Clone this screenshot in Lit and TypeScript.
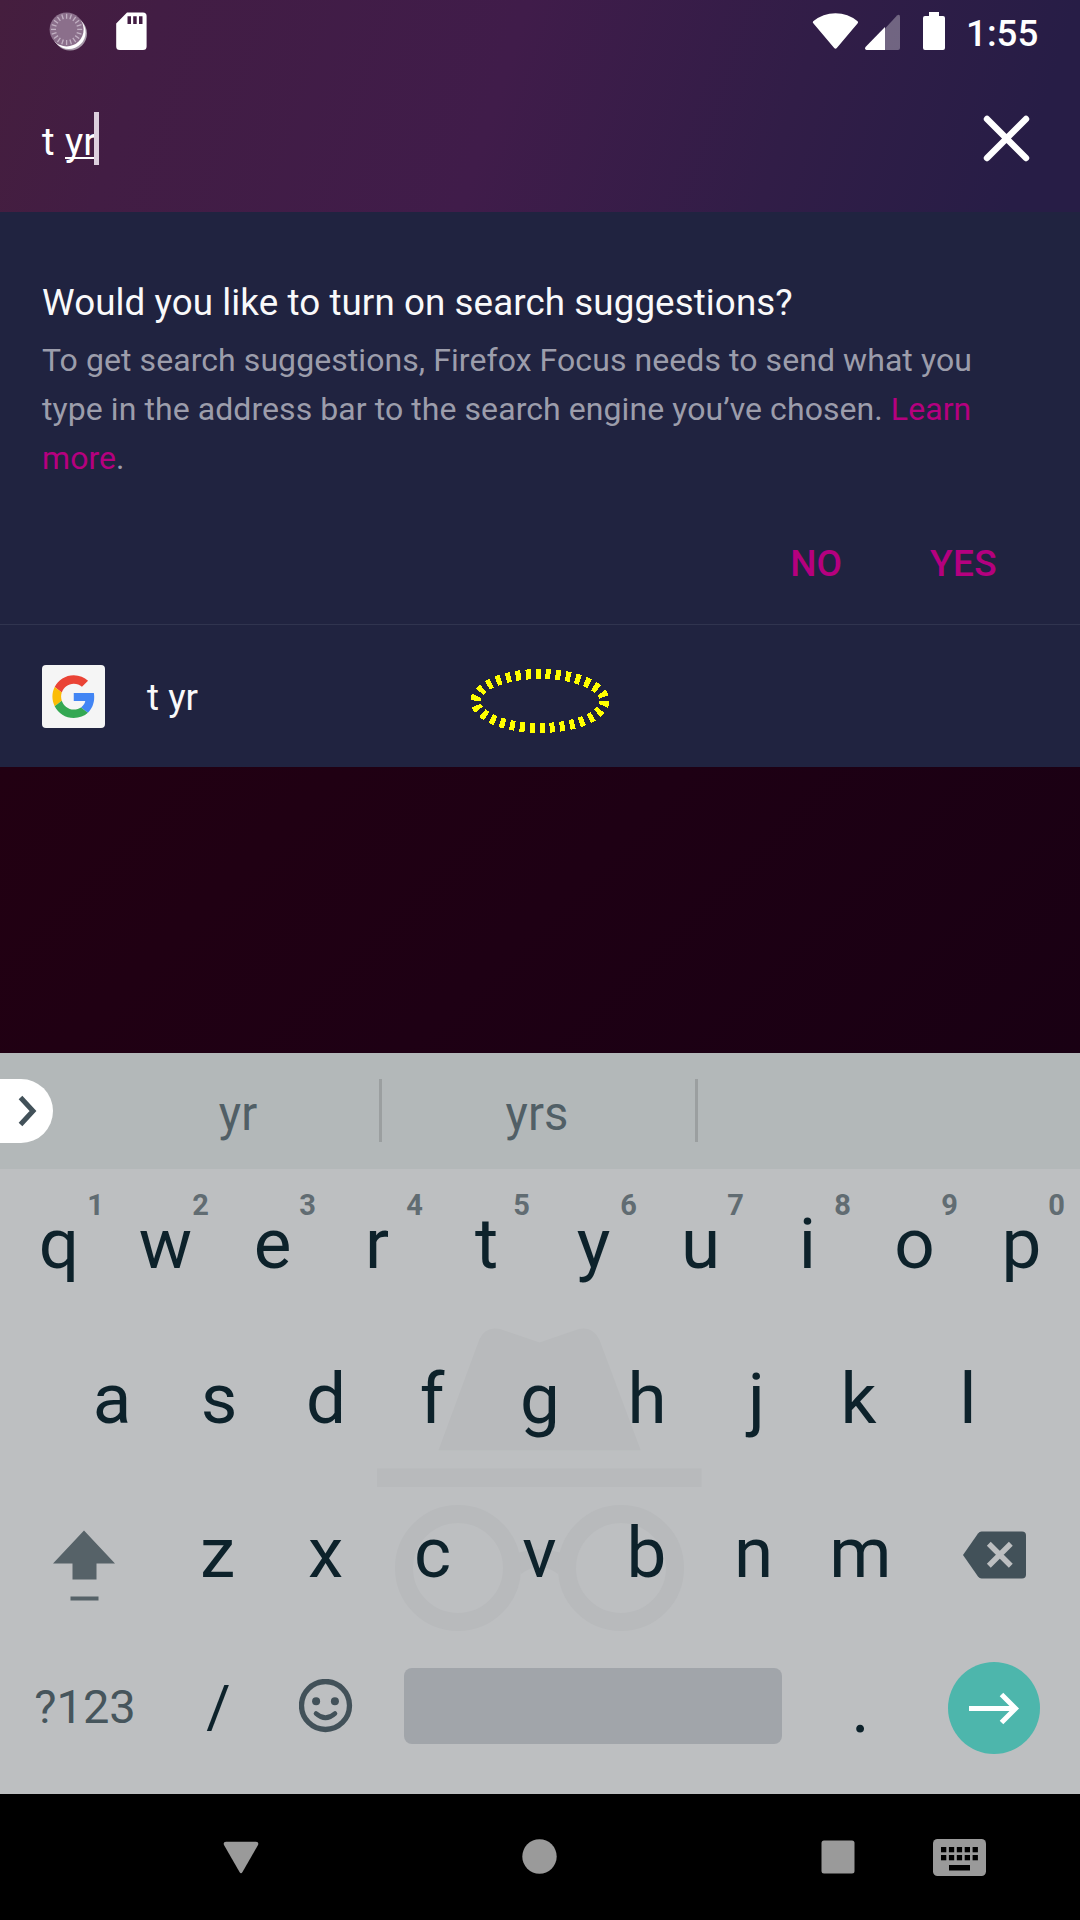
import { LitElement, html, css, svg } from "lit";
import { customElement, property } from "lit/decorators.js";

@customElement("status-bar")
class StatusBar extends LitElement {
  static styles = css`
    :host { display: flex; height: 72px; padding: 12px 43px 0 49px; box-sizing: border-box; color: #fff; }
    svg { display: block; flex: none; }
    .sd { margin-left: 28px; }
    .space { flex: 1; }
    .signal { margin-left: 6px; }
    .battery { margin-left: 23px; }
    .time { margin-left: 20px; font: 500 36.75px/43px Roboto, sans-serif; width: 71px; white-space: nowrap; }
  `;
  render() {
    const ticks = Array.from({ length: 20 }, (_, i) => i * 18);
    return html`
      <svg width="39" height="39" viewBox="0 0 39 39">
        <circle cx="21" cy="21.5" r="17" fill="#a698a8" />
        <circle cx="19.8" cy="20.2" r="16.8" fill="#fff" />
        <circle cx="17.6" cy="17.4" r="17" fill="#8b6f8b" />
        ${ticks.map((a) => svg`<line x1="17.6" y1="1.8" x2="17.6" y2="6.8" stroke="#c2b1c3" stroke-width="1.3" transform="rotate(${a} 17.6 17.4)" />`)}
      </svg>
      <svg class="sd" width="31" height="39" viewBox="0 0 31 39">
        <path fill="#fff" fill-rule="evenodd" d="M11 .5H27Q30.6 .5 30.6 4V34.5Q30.6 38 27 38H3.8Q.2 38 .2 34.5V11.5ZM11.5 4.3V12H15V4.3ZM17.2 4.3V12H20.7V4.3ZM23 4.3V12H26.5V4.3Z" />
      </svg>
      <div class="space"></div>
      <svg width="47" height="39" viewBox="0 0 47 39">
        <path fill="#fff" d="M1.2 9.2Q11 1.2 23.5 1.2T45.6 9.2Q46.6 10 45.7 11.2L24.8 36Q23.5 37.6 22.2 36L1.3 11.2Q.2 10 1.2 9.2Z" />
      </svg>
      <svg class="signal" width="35" height="39" viewBox="0 0 35 39">
        <path fill="#fff" fill-opacity=".32" d="M20 16.6 32 3.4Q35 1.6 35 5V36Q35 38 33 38H20Z" />
        <path fill="#fff" d="M20 15V38H1.5Q-.7 37.4 .5 35Z" />
      </svg>
      <svg class="battery" width="23" height="39" viewBox="0 0 23 39">
        <path fill="#fff" d="M6 0H16V4H20Q22 4 22 6V36Q22 38 20 38H2Q0 38 0 36V6Q0 4 2 4H6Z" />
      </svg>
      <div class="time">1:55</div>
    `;
  }
}

@customElement("url-bar")
class UrlBar extends LitElement {
  static styles = css`
    :host { display: flex; height: 140px; padding: 40px 49px 0 42px; box-sizing: border-box; color: #fff; justify-content: space-between; }
    .field { display: flex; height: 53px; font: 400 38.5px/59px Roboto, sans-serif; white-space: pre; }
    .gap { letter-spacing: .4px; }
    .composing { border-bottom: 2px solid #fff; height: 45px; line-height: 59px; }
    .caret { width: 5px; height: 53px; background: #dccfdd; margin-left: -2px; }
    .clear { display: block; margin-top: 3px; }
  `;
  render() {
    return html`
      <div class="field"><span class="gap">t </span><span class="composing">yr</span><span class="caret"></span></div>
      <svg class="clear" width="48" height="48" viewBox="0 0 48 48">
        <path d="M4 4 43 43M43 4 4 43" stroke="#fff" stroke-width="6.4" stroke-linecap="round" />
      </svg>
    `;
  }
}

@customElement("search-panel")
class SearchPanel extends LitElement {
  static styles = css`
    :host { display: block; height: 555px; background: #202340; font-family: Roboto, sans-serif; position: relative; }
    .prompt { height: 413px; box-sizing: border-box; padding: 66px 42px 0; border-bottom: 1px solid #30344f; }
    .title { font-size: 36.75px; line-height: 49px; letter-spacing: .08px; color: #f9f9fa; white-space: nowrap; }
    .text { font-size: 32px; line-height: 49.2px; letter-spacing: .07px; color: #9c9dab; margin-top: 9px; white-space: nowrap; }
    .link { color: #b5007f; }
    .actions { display: flex; justify-content: flex-end; gap: 88px; margin-top: 58px; padding-right: 41px; font-size: 37px; line-height: 43px; font-weight: 500; color: #b5007f; }
    .yes { letter-spacing: .4px; }
    .result { display: flex; align-items: center; gap: 42px; height: 142px; padding: 1px 0 0 42px; box-sizing: border-box; color: #f9f9fa; font-size: 36.75px; line-height: 43px; }
    .query { padding-top: 2px; }
    .engine { display: block; }
    .marker { position: absolute; left: 469px; top: 456px; }
  `;
  render() {
    return html`
      <div class="prompt">
        <div class="title">Would you like to turn on search suggestions?</div>
        <div class="text">To get search suggestions, Firefox Focus needs to send what you<br />type in the address bar to the search engine you’ve chosen. <span class="link">Learn<br />more</span>.</div>
        <div class="actions"><span>NO</span><span class="yes">YES</span></div>
      </div>
      <div class="result">
        <svg class="engine" width="63" height="63" viewBox="0 0 63 63">
          <rect width="63" height="63" rx="4" fill="#f5f5f5" />
          <g transform="translate(10.4 10.2) scale(.89)">
            <path fill="#EA4335" d="M24 9.5c3.54 0 6.71 1.22 9.21 3.6l6.85-6.85C35.9 2.38 30.47 0 24 0 14.62 0 6.51 5.38 2.56 13.22l7.98 6.19C12.43 13.72 17.74 9.5 24 9.5z" />
            <path fill="#4285F4" d="M46.98 24.55c0-1.57-.15-3.09-.38-4.55H24v9.02h12.94c-.58 2.96-2.26 5.48-4.78 7.18l7.73 6c4.51-4.18 7.09-10.36 7.09-17.65z" />
            <path fill="#FBBC05" d="M10.53 28.59c-.48-1.45-.76-2.99-.76-4.59s.27-3.14.76-4.59l-7.98-6.19C.92 16.46 0 20.12 0 24c0 3.88.92 7.54 2.56 10.78l7.97-6.19z" />
            <path fill="#34A853" d="M24 48c6.48 0 11.93-2.13 15.89-5.81l-7.73-6c-2.15 1.45-4.92 2.3-8.16 2.3-6.26 0-11.57-4.22-13.47-9.91l-7.98 6.19C6.51 42.62 14.62 48 24 48z" />
          </g>
        </svg>
        <span class="query">t yr</span>
      </div>
      <svg class="marker" width="142" height="66" viewBox="0 0 142 66">
        <ellipse cx="71" cy="33" rx="64.5" ry="27" fill="none" stroke="#ff0" stroke-width="10" stroke-dasharray="5 5" shape-rendering="crispEdges" />
      </svg>
    `;
  }
}

@customElement("letter-key")
class LetterKey extends LitElement {
  @property() label = "";
  @property() hint = "";
  @property({ reflect: true }) glyph = "";
  static styles = css`
    :host { display: grid; width: 107px; height: 154.5px; flex: none; font-family: Roboto, sans-serif; }
    .label { grid-area: 1 / 1; text-align: center; font-size: 71px; line-height: 149px; color: #0d222b; }
    .hint { grid-area: 1 / 1; justify-self: end; width: 37px; text-align: center; padding-top: 19px; font-size: 29px; line-height: 34px; font-weight: 700; color: #616c72; }
    :host([glyph="r"]) .label, :host([glyph="k"]) .label { padding-right: 5px; }
    :host([glyph="f"]) .label, :host([glyph="z"]) .label { padding-right: 2px; }
    :host([glyph="j"]) .label { padding-left: 5px; }
    :host([glyph="q"]) .hint { padding-left: 9px; width: 33px; }
    :host([glyph="q"]) .label { padding-left: 1px; }
  `;
  willUpdate() {
    this.glyph = this.label;
  }
  render() {
    return html`<span class="label">${this.label}</span>${this.hint ? html`<span class="hint">${this.hint}</span>` : ""}`;
  }
}

@customElement("soft-keyboard")
class SoftKeyboard extends LitElement {
  static styles = css`
    :host { display: block; height: 741px; font-family: Roboto, sans-serif; }
    svg { display: block; }
    .strip { display: flex; align-items: center; height: 116px; background: #b3b8b9; color: #515f66; font-size: 47.25px; }
    .chip { width: 52.5px; height: 64px; border-radius: 0 32px 32px 0; background: #fff; flex: none; }
    .word { text-align: center; line-height: 56px; padding-top: 5px; }
    .first { width: 284px; margin-left: 42.5px; padding-left: 2px; box-sizing: border-box; }
    .second { width: 313px; padding-right: 3px; box-sizing: border-box; }
    .bar { width: 3px; height: 63px; background: #9b9fa0; flex: none; margin-bottom: 1px; }
    .keys { position: relative; height: 625px; background: #bdbfc1; overflow: hidden; }
    .mark { position: absolute; left: 370px; top: 150px; }
    .rows { position: relative; }
    .row { display: flex; height: 154.5px; padding: 0 5px; }
    .middle { padding-left: 58.5px; }
    .side { width: 160px; display: flex; justify-content: center; align-items: center; }
    .shift { padding: 20px 2px 0 0; box-sizing: border-box; height: 154.5px; }
    .bottom { align-items: center; height: 147px; }
    .symbols { font-size: 47px; color: #46555c; justify-content: center; line-height: 56px; padding-top: 2px; }
    .cell { width: 107px; display: flex; justify-content: center; font-size: 59px; line-height: 70px; color: #0d222b; }
    .slash { padding-top: 2px; }
    .dot { padding-top: 3px; font-size: 70px; }
    .spacebar { width: 378px; height: 76px; border-radius: 8px; background: #a1a5aa; margin: 0 25px; }
    .enter { width: 92px; height: 92px; border-radius: 50%; background: #4db6ac; margin-top: 4px; }
  `;
  render() {
    const top = [..."qwertyuiop"];
    return html`
      <div class="strip">
        <div class="chip">
          <svg width="52" height="64" viewBox="0 0 52 64"><path d="M20.5 18.5 33 32 20.5 45.5" fill="none" stroke="#425159" stroke-width="5" /></svg>
        </div>
        <div class="word first">yr</div>
        <div class="bar"></div>
        <div class="word second">yrs</div>
        <div class="bar"></div>
      </div>
      <div class="keys">
        <svg class="mark" width="340" height="320" viewBox="370 1319 340 320">
          <g fill="#b8babc">
            <path d="M438.5 1450.3 479.5 1339Q485.5 1326 500 1329L539.5 1342.5 579 1329Q593 1326 599.5 1340L640.7 1450.3Z" />
            <rect x="377" y="1468.5" width="324.5" height="18.5" />
            <path d="M517 1553Q539.5 1546 562 1553L558 1574Q539.5 1560 521 1574Z" />
          </g>
          <g fill="none" stroke="#b8babc" stroke-width="18"><circle cx="458" cy="1568" r="54" /><circle cx="621" cy="1568" r="54" /></g>
        </svg>
        <div class="rows">
          <div class="row">${top.map((k, i) => html`<letter-key .label=${k} .hint=${String((i + 1) % 10)}></letter-key>`)}</div>
          <div class="row middle">${[..."asdfghjkl"].map((k) => html`<letter-key .label=${k}></letter-key>`)}</div>
          <div class="row">
            <div class="side shift">
              <svg width="64" height="72" viewBox="0 0 64 72"><path d="M32 1.5 63 34.5H44.5V50.5H20.5V34.5H1ZM18.5 67.5H46.5V71.5H18.5Z" fill="#566268" /></svg>
            </div>
            ${[..."zxcvbnm"].map((k) => html`<letter-key .label=${k}></letter-key>`)}
            <div class="side">
              <svg width="63" height="48" viewBox="0 0 63 48">
                <path d="M18.5 .5H59Q63 .5 63 4.5V43.5Q63 47.5 59 47.5H18.5Q16.5 47.5 15 45.5L0 24 15 2.5Q16.5 .5 18.5 .5Z" fill="#425159" />
                <path d="M25.8 12.8 47.8 34.8M47.8 12.8 25.8 34.8" stroke="#bdbfc1" stroke-width="5.5" />
              </svg>
            </div>
          </div>
          <div class="row bottom">
            <div class="side symbols">?123</div>
            <div class="cell slash">/</div>
            <div class="cell">
              <svg width="54" height="54" viewBox="0 0 54 54">
                <circle cx="26.5" cy="26.5" r="24" fill="none" stroke="#425159" stroke-width="5.3" />
                <circle cx="17.1" cy="22.3" r="4" fill="#425159" /><circle cx="35.9" cy="22.3" r="4" fill="#425159" />
                <path d="M17 34.5Q26.500 43 36 34.5" fill="none" stroke="#425159" stroke-width="4.6" stroke-linecap="round" />
              </svg>
            </div>
            <div class="spacebar"></div>
            <div class="cell dot">.</div>
            <div class="side">
              <div class="enter">
                <svg width="92" height="92" viewBox="0 0 92 92"><path d="M21 46.5H67M53.5 32.5 67.5 46.5 53.5 60.5" fill="none" stroke="#fff" stroke-width="5" /></svg>
              </div>
            </div>
          </div>
        </div>
      </div>
    `;
  }
}

@customElement("nav-bar")
class NavBar extends LitElement {
  static styles = css`
    :host { display: flex; height: 126px; padding: 0 0 1px 223px; box-sizing: border-box; background: #000; align-items: center; }
    svg { display: block; flex: none; }
    .home { margin-left: 263px; }
    .recent { margin-left: 264px; }
    .ime { margin-left: 78px; margin-top: 1px; }
  `;
  render() {
    const holes = [0, 1].flatMap((r) => [0, 1, 2, 3, 4].map((c) => [8 + c * 7.9, 8 + r * 8]));
    return html`
      <svg width="36" height="36" viewBox="0 0 36 36"><path d="M3 2.8H33Q36.2 3 35 6L19.5 33Q18 35.5 16.5 33L1 6Q-.2 3 3 2.8Z" fill="#9a9a9a" /></svg>
      <svg class="home" width="35" height="35" viewBox="0 0 35 35"><circle cx="17.5" cy="17.5" r="17.2" fill="#9a9a9a" /></svg>
      <svg class="recent" width="34" height="34" viewBox="0 0 34 34"><rect x=".5" y=".5" width="33" height="33" rx="2.5" fill="#9a9a9a" /></svg>
      <svg class="ime" width="53" height="37" viewBox="0 0 53 37">
        <rect width="53" height="37" rx="4.5" fill="#9a9a9a" />
        ${holes.map(([x, y]) => svg`<rect x=${x} y=${y} width="5.3" height="5.3" />`)}
        <rect x="16" y="26" width="21" height="5.5" />
      </svg>
    `;
  }
}

@customElement("app-root")
class AppRoot extends LitElement {
  static styles = css`
    :host { display: flex; flex-direction: column; width: 1080px; height: 1920px; overflow: hidden; }
    .header { background: linear-gradient(108deg, #451e3e 0%, #421d44 14%, #401c4a 46%, #311d47 72%, #271d46 94%); }
    .backdrop { height: 286px; background: linear-gradient(135deg, #220012, #1e0014 50%, #190013); }
  `;
  render() {
    return html`
      <div class="header"><status-bar></status-bar><url-bar></url-bar></div>
      <search-panel></search-panel>
      <div class="backdrop"></div>
      <soft-keyboard></soft-keyboard>
      <nav-bar></nav-bar>
    `;
  }
}
